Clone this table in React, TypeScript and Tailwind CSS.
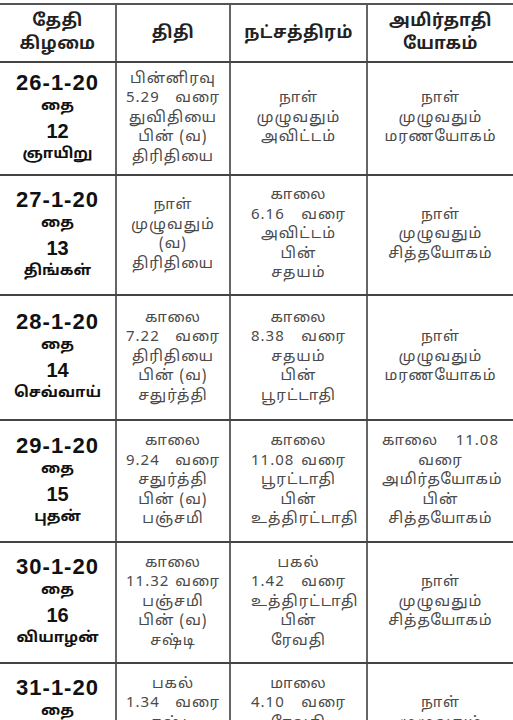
const rows = [
  {
    date: ['26-1-20', 'தை', '12', 'ஞாயிறு'],
    thithi: ['பின்னிரவு', '5.29|வரை', 'துவிதியை', 'பின் (வ)', 'திரிதியை'],
    star: ['நாள்', 'முழுவதும்', 'அவிட்டம்'],
    yogam: ['நாள்', 'முழுவதும்', 'மரணயோகம்'],
    h: 'h-[113px]',
  },
  {
    date: ['27-1-20', 'தை', '13', 'திங்கள்'],
    thithi: ['நாள்', 'முழுவதும்', '(வ)', 'திரிதியை'],
    star: ['காலை', '6.16|வரை', 'அவிட்டம்', 'பின்', 'சதயம்'],
    yogam: ['நாள்', 'முழுவதும்', 'சித்தயோகம்'],
    h: 'h-[120px]',
  },
  {
    date: ['28-1-20', 'தை', '14', 'செவ்வாய்'],
    thithi: ['காலை', '7.22|வரை', 'திரிதியை', 'பின் (வ)', 'சதுர்த்தி'],
    star: ['காலை', '8.38|வரை', 'சதயம்', 'பின்', 'பூரட்டாதி'],
    yogam: ['நாள்', 'முழுவதும்', 'மரணயோகம்'],
    h: 'h-[125px]',
  },
  {
    date: ['29-1-20', 'தை', '15', 'புதன்'],
    thithi: ['காலை', '9.24|வரை', 'சதுர்த்தி', 'பின் (வ)', 'பஞ்சமி'],
    star: ['காலை', '11.08|வரை', 'பூரட்டாதி', 'பின்', 'உத்திரட்டாதி'],
    yogam: ['காலை|11.08', 'வரை', 'அமிர்தயோகம்', 'பின்', 'சித்தயோகம்'],
    h: 'h-[122px]',
  },
  {
    date: ['30-1-20', 'தை', '16', 'வியாழன்'],
    thithi: ['காலை', '11.32|வரை', 'பஞ்சமி', 'பின் (வ)', 'சஷ்டி'],
    star: ['பகல்', '1.42|வரை', 'உத்திரட்டாதி', 'பின்', 'ரேவதி'],
    yogam: ['நாள்', 'முழுவதும்', 'சித்தயோகம்'],
    h: 'h-[121px]',
  },
  {
    date: ['31-1-20', 'தை', '17', 'வெள்ளி'],
    thithi: ['பகல்', '1.34|வரை', 'சஷ்டி', 'பின் (வ)', 'சப்தமி'],
    star: ['மாலை', '4.10|வரை', 'ரேவதி', 'பின்', 'அசுவினி'],
    yogam: ['நாள்', 'முழுவதும்', 'சித்தயோகம்'],
    h: 'h-[121px]',
  },
];

const tamil = "font-['Noto_Sans_Tamil','Lohit_Tamil','Noto_Sans',sans-serif]";

function Lines({ lines, pad }: { lines: string[]; pad: string }) {
  return (
    <div className={`flex flex-col w-full ${pad}`}>
      {lines.map((l, i) =>
        l.includes('|') ? (
          <div key={i} className="flex justify-between gap-[6px]">
            {l.split('|').map((w, j) => (
              <span key={j}>{w}</span>
            ))}
          </div>
        ) : (
          <div key={i} className="text-center whitespace-nowrap">
            {l}
          </div>
        )
      )}
    </div>
  );
}

export default function App() {
  return (
    <div className={`w-[513px] h-[720px] overflow-hidden bg-white pt-[3px] ${tamil}`}>
      <div className="border-t-2 border-[#555]">
        <div className="grid grid-cols-[117px_114px_137px_145px] h-[58px] border-b-2 border-[#444] text-[17px] tracking-[0.5px] font-bold text-[#222] leading-[23px]">
          <div className="flex flex-col items-center justify-center border-r-2 border-[#666]">
            <span>தேதி</span>
            <span>கிழமை</span>
          </div>
          <div className="flex items-center justify-center border-r-2 border-[#666]">திதி</div>
          <div className="flex items-center justify-center border-r-2 border-[#666]">நட்சத்திரம்</div>
          <div className="flex flex-col items-center justify-center">
            <span>அமிர்தாதி</span>
            <span>யோகம்</span>
          </div>
        </div>
        {rows.map((r, i) => (
          <div
            key={i}
            className={`grid grid-cols-[117px_114px_137px_145px] ${r.h} border-b-2 border-[#444] text-[15px] tracking-[1px] text-[#4a4a4a] leading-[19.5px]`}
          >
            <div className="flex flex-col items-center justify-center border-r-2 border-[#666] text-[#111] font-bold tracking-normal">
              <span className="font-['Liberation_Sans',sans-serif] text-[22px] tracking-[1px] leading-[25px]">{r.date[0]}</span>
              <span className="text-[15px] leading-[24px]">{r.date[1]}</span>
              <span className="font-['Liberation_Sans',sans-serif] text-[20px] leading-[24px]">{r.date[2]}</span>
              <span className="text-[15px] leading-[24px]">{r.date[3]}</span>
            </div>
            <div className="flex items-center border-r-2 border-[#666]">
              <Lines lines={r.thithi} pad="px-[9px]" />
            </div>
            <div className="flex items-center border-r-2 border-[#666]">
              <Lines lines={r.star} pad="px-[20px]" />
            </div>
            <div className="flex items-center">
              <Lines lines={r.yogam} pad="px-[14px]" />
            </div>
          </div>
        ))}
      </div>
    </div>
  );
}
